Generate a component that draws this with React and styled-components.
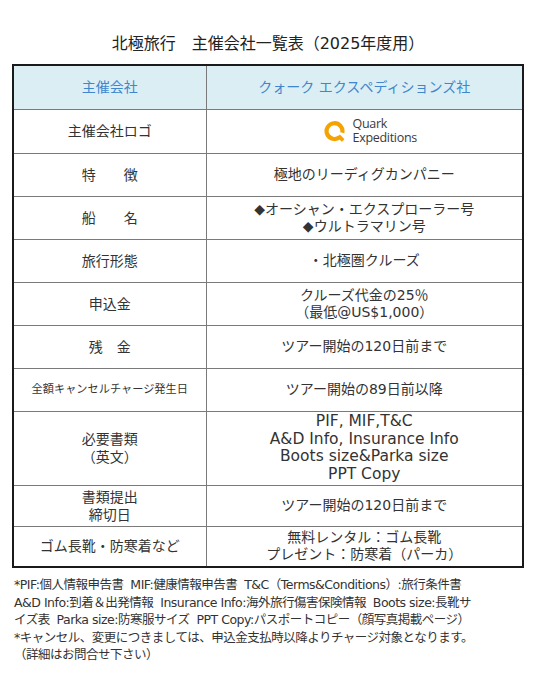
import React from "react";
import styled, { createGlobalStyle } from "styled-components";

const GlobalStyle = createGlobalStyle`
  body {
    margin: 0;
    background: #ffffff;
    font-family: "DejaVu Sans", "Noto Sans CJK JP", sans-serif;
    color: #333333;
  }
`;

const Page = styled.div`
  width: 540px;
  height: 675px;
  padding: 33px 16px 0 12px;
  box-sizing: border-box;
`;

const Title = styled.h1`
  margin: 0 0 9px;
  font-size: 16px;
  font-weight: 400;
  line-height: 22px;
  text-align: center;
  color: #222;
`;

const Table = styled.table`
  width: 512px;
  border-collapse: collapse;
  border: 2px solid #1a1a1a;
  table-layout: fixed;
`;

const Row = styled.tr`
  height: ${(p) => p.h || 43}px;
  background: ${(p) => (p.head ? "#dbeef4" : "#fff")};
`;

const Cell = styled.td`
  border: 1px solid #7a7a7a;
  padding: 0 4px;
  text-align: center;
  vertical-align: middle;
  font-size: ${(p) => p.size || 14}px;
  line-height: ${(p) => p.lh || 17}px;
  color: ${(p) => (p.head ? "#4086cc" : "#333")};
  white-space: nowrap;
`;

const Line = styled.div`
  line-height: inherit;
`;

const Logo = styled.div`
  display: inline-flex;
  align-items: center;
  gap: 7px;
  margin-left: 12px;
`;

const LogoText = styled.div`
  font-family: "Open Sans", "Lato", sans-serif;
  font-size: 12.5px;
  line-height: 14px;
  color: #3a3a3a;
  text-align: left;
  letter-spacing: -0.3px;
`;

const Notes = styled.div`
  margin-top: 8px;
  padding-left: 2px;
  font-size: 12.5px;
  line-height: 17.6px;
  color: #333;
  letter-spacing: -0.5px;
`;

const NoteLine = styled.div`
  white-space: pre;
`;

const QuarkMark = () => (
  <svg width="22" height="22" viewBox="0 0 20 20">
    <path
      d="M14.2 15.6 A7.2 7.2 0 1 1 16.6 11.6"
      fill="none"
      stroke="#f4a300"
      strokeWidth="3.8"
    />
    <path d="M13.2 14.4 L17.4 18.6" stroke="#f4a300" strokeWidth="3.4" />
  </svg>
);

const rows = [
  { label: "特　　徴", value: ["極地のリーディグカンパニー"] },
  { label: "船　　名", value: ["◆オーシャン・エクスプローラー号", "◆ウルトラマリン号"] },
  { label: "旅行形態", value: ["・北極圏クルーズ"] },
  { label: "申込金", value: ["クルーズ代金の25％", "（最低@US$1,000）"] },
  { label: "残　金", value: ["ツアー開始の120日前まで"] },
  { label: "全額キャンセルチャージ発生日", small: true, value: ["ツアー開始の89日前以降"] },
  {
    label: ["必要書類", "（英文）"],
    h: 74,
    value: ["PIF, MIF,T&C", "A&D Info, Insurance Info", "Boots size&Parka size", "PPT Copy"],
  },
  { label: ["書類提出", "締切日"], h: 41, value: ["ツアー開始の120日前まで"] },
  { label: "ゴム長靴・防寒着など", h: 41, value: ["無料レンタル：ゴム長靴", "プレゼント：防寒着（パーカ）"] },
];

export default function App() {
  return (
    <Page>
      <GlobalStyle />
      <Title>北極旅行　主催会社一覧表（2025年度用）</Title>
      <Table>
        <colgroup>
          <col style={{ width: 193 }} />
          <col />
        </colgroup>
        <tbody>
          <Row head h={44}>
            <Cell head>主催会社</Cell>
            <Cell head>クォーク エクスペディションズ社</Cell>
          </Row>
          <Row h={44}>
            <Cell>主催会社ロゴ</Cell>
            <Cell>
              <Logo>
                <QuarkMark />
                <LogoText>
                  Quark
                  <br />
                  Expeditions
                </LogoText>
              </Logo>
            </Cell>
          </Row>
          {rows.map((r, i) => (
            <Row key={i} h={r.h}>
              <Cell size={r.small ? 11.2 : 14} lh={18}>
                {Array.isArray(r.label)
                  ? r.label.map((l) => <Line key={l}>{l}</Line>)
                  : r.label}
              </Cell>
              <Cell
                size={r.value.length > 3 ? 15.5 : 14}
                lh={r.value.length > 3 ? 17.5 : 17}
              >
                {r.value.map((v) => (
                  <Line key={v}>{v}</Line>
                ))}
              </Cell>
            </Row>
          ))}
        </tbody>
      </Table>
      <Notes>
        <NoteLine>*PIF:個人情報申告書  MIF:健康情報申告書  T&C（Terms&Conditions）:旅行条件書</NoteLine>
        <NoteLine>A&D Info:到着＆出発情報  Insurance Info:海外旅行傷害保険情報  Boots size:長靴サ</NoteLine>
        <NoteLine>イズ表  Parka size:防寒服サイズ  PPT Copy:パスポートコピー（顔写真掲載ページ）</NoteLine>
        <NoteLine>*キャンセル、変更につきましては、申込金支払時以降よりチャージ対象となります。</NoteLine>
        <NoteLine>（詳細はお問合せ下さい）</NoteLine>
      </Notes>
    </Page>
  );
}
